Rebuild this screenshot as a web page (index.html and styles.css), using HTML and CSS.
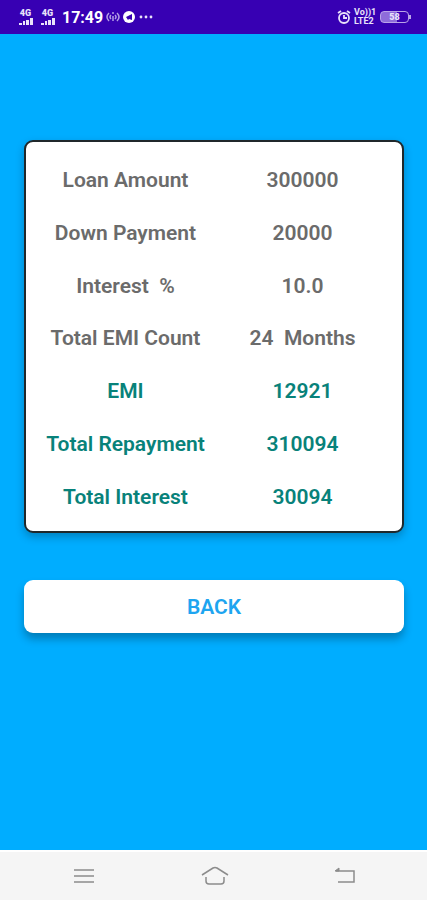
FILE: index.html
```
<!DOCTYPE html>
<html lang="en">
<head>
    <meta charset="UTF-8">
    <meta name="viewport" content="width=device-width, initial-scale=1.0">
    <title>EMI Calculator</title>
    <link rel="stylesheet" href="styles.css">
</head>
<body>
    <header class="status-bar">
        <div class="status-group">
            <div class="signal">
                <span>4G</span>
                <svg width="14" height="7" viewBox="0 0 14 7"><path d="M0 5h3v2H0zM4 3h2v4H4zM7 2h3v5H7zM11 0h3v7h-3z" fill="currentColor"/></svg>
            </div>
            <div class="signal">
                <span>4G</span>
                <svg width="14" height="7" viewBox="0 0 14 7"><path d="M0 5h3v2H0zM4 3h2v4H4zM7 2h3v5H7zM11 0h3v7h-3z" fill="currentColor"/></svg>
            </div>
            <time class="clock">17:49</time>
            <svg class="hotspot" width="14" height="12" viewBox="0 0 14 12" fill="none" stroke="currentColor" stroke-width="1.5">
                <path d="M3 2Q-1 6 3 10M5 4Q3 6 5 8M11 2q4 4 0 8M9 4q2 2 0 4M7 5v5M6 2h2"/>
            </svg>
            <svg width="13" height="12" viewBox="0 0 13 12">
                <circle cx="6" cy="6" r="6" fill="white"/>
                <path d="M3 6l6-3v6l-3-1-1 1z" fill="#3700b3"/>
            </svg>
            <svg width="14" height="12" viewBox="0 0 14 12" fill="currentColor">
                <circle cx="2" cy="6" r="1.4"/><circle cx="7" cy="6" r="1.4"/><circle cx="12" cy="6" r="1.4"/>
            </svg>
        </div>
        <div class="status-group">
            <svg width="14" height="16" viewBox="0 0 14 16" fill="none" stroke="currentColor" stroke-width="1.8">
                <circle cx="7" cy="9" r="5"/>
                <path d="M7 6v3h3M1 4l3-2M13 4l-3-2"/>
            </svg>
            <div class="volte"><span>Vo))1</span><span>LTE2</span></div>
            <div class="battery"><span>58</span></div>
        </div>
    </header>

    <main class="content">
        <section class="card">
            <table class="result">
                <tr>
                    <th scope="row">Loan Amount</th>
                    <td>300000</td>
                </tr>
                <tr>
                    <th scope="row">Down Payment</th>
                    <td>20000</td>
                </tr>
                <tr>
                    <th scope="row">Interest&nbsp; %</th>
                    <td>10.0</td>
                </tr>
                <tr>
                    <th scope="row">Total EMI Count</th>
                    <td>24&nbsp; Months</td>
                </tr>
                <tr class="total">
                    <th scope="row">EMI</th>
                    <td>12921</td>
                </tr>
                <tr class="total">
                    <th scope="row">Total Repayment</th>
                    <td>310094</td>
                </tr>
                <tr class="total">
                    <th scope="row">Total Interest</th>
                    <td>30094</td>
                </tr>
            </table>
        </section>
        <button type="button" class="back-btn">BACK</button>
    </main>

    <nav class="nav-bar">
        <button type="button" aria-label="Recent apps">
            <svg width="28" height="20" viewBox="0 0 28 20" fill="none" stroke="currentColor" stroke-width="1.6">
                <path d="M4 4h20M4 10h20M4 16h20"/>
            </svg>
        </button>
        <button type="button" aria-label="Home">
            <svg width="28" height="20" viewBox="0 0 28 20" fill="none" stroke="currentColor" stroke-width="1.5">
                <path d="M1 9L12 2q2-1 4 0l11 7M5 11v4q0 3 3 3h12q3 0 3-3v-4"/>
            </svg>
        </button>
        <button type="button" aria-label="Back">
            <svg width="28" height="20" viewBox="0 0 28 20" fill="none" stroke="currentColor" stroke-width="1.5">
                <path d="M5 5h18v11H7"/>
                <path d="M4 5l4-3v3z" fill="currentColor" stroke-width="1"/>
            </svg>
        </button>
    </nav>
</body>
</html>
```
FILE: styles.css
```
:root {
    --primary-color: #00adff;
    --status-color: #3700b3;
    --text-color: #6b6b6b;
    --total-color: #08827a;
}

* {
    box-sizing: border-box;
}

body {
    font-family: Roboto, sans-serif;
    margin: 0;
    background: var(--primary-color);
    min-height: 100vh;
    display: flex;
    flex-direction: column;
}

.status-bar {
    display: flex;
    justify-content: space-between;
    align-items: center;
    height: 34px;
    padding: 0 18px;
    background: var(--status-color);
    color: #e9e2fa;
}

.status-group {
    display: flex;
    align-items: center;
    gap: 3px;
}

.signal {
    display: flex;
    flex-direction: column;
    align-items: center;
    width: 15px;
    margin-right: 4px;
    font-size: 9px;
    line-height: 9px;
    font-weight: 900;
}

.clock {
    font-size: 16px;
    font-weight: 700;
    color: white;
}

.hotspot {
    opacity: 0.7;
}

.volte {
    display: flex;
    flex-direction: column;
    width: 23px;
    font-size: 9px;
    line-height: 9px;
    font-weight: 700;
}

.battery {
    position: relative;
    width: 29px;
    height: 12px;
    border: 1px solid #b9a4e8;
    border-radius: 4px;
    background: linear-gradient(to right, #8e6cda 58%, transparent 58%);
    font-size: 9px;
    line-height: 10px;
    font-weight: 900;
    text-align: center;
}

.battery::after {
    content: "";
    position: absolute;
    right: -3px;
    top: 3px;
    width: 2px;
    height: 4px;
    background: #b9a4e8;
}

.content {
    flex: 1;
    display: flex;
    flex-direction: column;
    gap: 47px;
    padding: 106px 23px 32px 24px;
}

.card {
    padding: 12px 11px 8px;
    background: white;
    border: 2px solid #20282b;
    border-radius: 9px;
    box-shadow: 0 4px 8px rgba(0, 0, 0, 0.25);
}

.result {
    width: 100%;
    height: 369px;
    table-layout: fixed;
    border-collapse: collapse;
    font-size: 21px;
    line-height: 24px;
    color: var(--text-color);
}

.result th,
.result td {
    padding: 0;
    font-weight: 600;
    text-align: center;
    white-space: nowrap;
}

.total {
    color: var(--total-color);
}

.back-btn {
    height: 53px;
    border: none;
    border-radius: 9px;
    background: white;
    box-shadow: 0 6px 8px rgba(0, 0, 0, 0.28);
    font-family: inherit;
    font-size: 21px;
    font-weight: 600;
    color: #1ea5f0;
    cursor: pointer;
}

.nav-bar {
    display: flex;
    justify-content: space-between;
    align-items: center;
    height: 50px;
    padding: 0 68px 0 70px;
    background: #f5f5f5;
    border-top: 2px solid white;
}

.nav-bar button {
    display: flex;
    padding: 0;
    border: none;
    background: none;
    color: #8c8c8c;
    cursor: pointer;
}
```
